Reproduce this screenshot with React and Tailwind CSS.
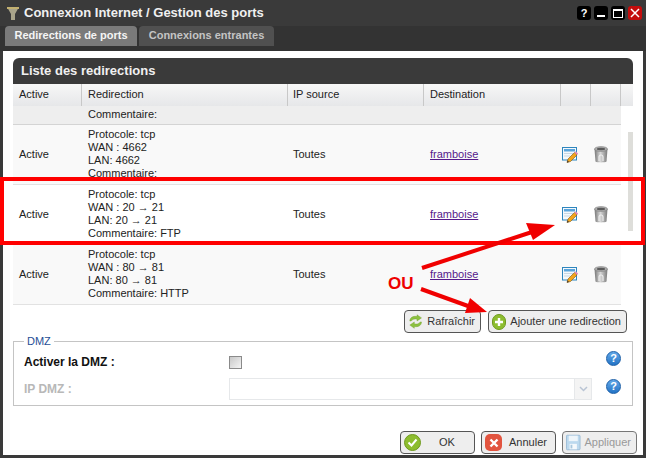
import React from "react";

function EditIcon() {
  return (
    <svg width="18" height="18" viewBox="0 0 18 18">
      <rect x="1.500" y="1.500" width="14" height="12.500" fill="#f4f8fc" stroke="#2f86bd" />
      <rect x="3" y="3" width="11" height="2.500" fill="#5aa5dc" />
      <path d="M3 7.500h9M3 10h6" stroke="#c9d8e4" />
      <path d="M6 16.500l1-3.500 6.500-6.500 2.500 2.500-6.500 6.500z" fill="#f2a51e" stroke="#7a5410" strokeWidth="0.6" />
      <path d="M13.500 6.500l1.200-1.200 2.500 2.500-1.200 1.200z" fill="#e58ab8" />
      <path d="M6 16.500l.6-2 1.400 1.400z" fill="#333" />
    </svg>
  );
}

function TrashIcon() {
  return (
    <svg width="14" height="17" viewBox="0 0 14 17">
      <defs>
        <linearGradient id="bin" x1="0" x2="1" y1="0" y2="0">
          <stop offset="0" stopColor="#777" />
          <stop offset="0.45" stopColor="#d8d8d8" />
          <stop offset="1" stopColor="#7a7a7a" />
        </linearGradient>
      </defs>
      <path d="M0.500 3l1 12.500c1.500 1.200 9.500 1.200 11 0L13.500 3z" fill="url(#bin)" />
      <ellipse cx="7" cy="3" rx="6.500" ry="2.400" fill="#b0b0b0" stroke="#707070" strokeWidth="0.5" />
      <ellipse cx="7" cy="3" rx="4.200" ry="1.200" fill="#5c5c5c" />
      <path d="M5 15v-4a2 2 0 0 1 4 0v4" fill="none" stroke="#f4f4f4" strokeWidth="1.200" opacity="0.85" />
    </svg>
  );
}

function HelpIcon() {
  return (
    <span className="flex h-[15px] w-[15px] items-center justify-center rounded-full border border-[#1c5fa8] bg-gradient-to-b from-[#62a8e8] to-[#2274c6] text-[11px] font-bold leading-none text-white">
      ?
    </span>
  );
}

function RefreshIcon() {
  return (
    <svg width="17" height="15" viewBox="0 0 17 15">
      <path d="M2 7c0-4 4-6 8-5V0l5 3.500-5 3.500V5c-3-.8-5 0-6.500 2z" fill="#8cc13f" stroke="#6c9a2a" strokeWidth="0.4" />
      <path d="M15 8c0 4-4 6-8 5v2L2 11.500 7 8v2c3 .8 5 0 6.500-2z" fill="#8cc13f" stroke="#6c9a2a" strokeWidth="0.4" />
    </svg>
  );
}

function PlusIcon() {
  return (
    <span className="flex h-[16px] w-[16px] items-center justify-center rounded-full border border-[#6f9a1e] bg-[#8dbd2f]">
      <svg width="10" height="10" viewBox="0 0 10 10">
        <path d="M5 1v8M1 5h8" stroke="#fff" strokeWidth="2.400" />
      </svg>
    </span>
  );
}

function OkIcon() {
  return (
    <span className="flex h-[17px] w-[17px] items-center justify-center rounded-full border border-[#6f9a1e] bg-[#8dbd2f]">
      <svg width="11" height="9" viewBox="0 0 11 9">
        <path d="M1.500 4.500l3 3 5-6" fill="none" stroke="#fff" strokeWidth="2" />
      </svg>
    </span>
  );
}

function CancelIcon() {
  return (
    <span className="flex h-[17px] w-[17px] items-center justify-center rounded-[5px] bg-[#e2543f]">
      <svg width="10" height="10" viewBox="0 0 10 10">
        <path d="M1.500 1.500l7 7M8.500 1.500l-7 7" stroke="#fff" strokeWidth="2.400" />
      </svg>
    </span>
  );
}

function SaveIcon() {
  return (
    <svg width="16" height="17" viewBox="0 0 16 17">
      <rect x="0.500" y="0.500" width="15" height="16" rx="1" fill="#bcd9ee" stroke="#9bbcd6" />
      <rect x="3" y="1" width="10" height="6" fill="#eef5fa" />
      <rect x="4" y="10" width="8" height="6" fill="#f5f9fc" />
      <rect x="5" y="11" width="2" height="4" fill="#a9c8de" />
    </svg>
  );
}

function WinButton({ className, children }) {
  return (
    <span className={`flex h-[14px] w-[14px] items-center justify-center rounded-[3px] ${className}`}>
      {children}
    </span>
  );
}

function Row({ wan, lan, comment, white }) {
  return (
    <div className={`flex h-[60px] items-center border-b border-[#e2e2e2] text-[11px] leading-[13px] text-[#222] ${white ? "bg-white" : "bg-[#f9f9f9]"}`}>
      <div className="w-[69px] pl-[6px]">Active</div>
      <div className="w-[206px] pb-[2px] pl-[6px]">
        <div>Protocole: tcp</div>
        <div>WAN : {wan}</div>
        <div>LAN: {lan}</div>
        <div>Commentaire:{comment ? ` ${comment}` : ""}</div>
      </div>
      <div className="w-[136px] pl-[5px]">Toutes</div>
      <div className="w-[137px] pl-[6px] text-[#551a8b] underline">framboise</div>
      <div className="flex w-[30px] justify-start">
        <EditIcon />
      </div>
      <div className="flex w-[30px] justify-start pl-[3px]">
        <TrashIcon />
      </div>
    </div>
  );
}

function Button({ icon, width, dim, children }) {
  return (
    <button
      className={`flex h-[23px] shrink-0 items-center gap-[4px] rounded-[4px] border bg-[#eeeeee] pl-[3px] text-[11px] ${width} ${dim ? "border-[#777] text-[#999]" : "border-[#555] text-[#333]"}`}
    >
      {icon}
      <span className="flex-1 whitespace-nowrap pr-[5px] text-center">{children}</span>
    </button>
  );
}

export default function App() {
  return (
    <div className="relative flex h-[458px] w-[646px] flex-col overflow-hidden bg-[#3a3a3a] font-['Liberation_Sans',Arial,sans-serif]">
      <div className="flex h-[26px] shrink-0 items-center pl-[6px] pr-[4px]">
        <svg width="14" height="17" viewBox="0 0 14 17">
          <path d="M1 2h12l-4 7v6H5V9z" fill="#a9a48a" />
          <path d="M1 2h12v2H1z" fill="#c2b070" />
        </svg>
        <span className="ml-[4px] text-[13px] font-bold text-[#f0f0f0]">
          Connexion Internet / Gestion des ports
        </span>
        <div className="ml-auto flex gap-[3px]">
          <WinButton className="bg-black text-[11px] font-bold text-white">?</WinButton>
          <WinButton className="items-end bg-black pb-[3px]">
            <span className="h-[2px] w-[8px] bg-white" />
          </WinButton>
          <WinButton className="bg-black">
            <span className="h-[9px] w-[10px] border border-t-2 border-white" />
          </WinButton>
          <WinButton className="bg-[#c40d0d]">
            <svg width="10" height="10" viewBox="0 0 10 10">
              <path d="M1 1l8 8M9 1l-8 8" stroke="#fff" strokeWidth="1.500" />
            </svg>
          </WinButton>
        </div>
      </div>

      <div className="flex h-[25px] shrink-0 gap-[2px] bg-[#333] pl-[5px] text-[11px] font-bold">
        <div className="flex h-[20px] w-[132px] items-center justify-center rounded-t-[4px] bg-[#7a7a7a] pb-[1px] text-[#f5f5f5]">
          Redirections de ports
        </div>
        <div className="flex h-[20px] w-[135px] items-center justify-center rounded-t-[4px] bg-[#505050] pb-[1px] text-[#c4c4c4]">
          Connexions entrantes
        </div>
      </div>

      <div className="mx-[3px] mb-[3px] flex flex-1 flex-col bg-white px-[10px] pt-[7px]">
        <div className="flex h-[26px] shrink-0 items-center rounded-t-[6px] bg-[#3a3a3a] pb-[1px] pl-[8px] text-[13px] font-bold text-[#f0f0f0]">
          Liste des redirections
        </div>
        <div className="flex h-[22px] shrink-0 items-center bg-gradient-to-b from-[#f7f7f7] to-[#e6e7e9] text-[11px] text-[#222]">
          <div className="flex h-full w-[69px] items-center border-r border-[#c8c8c8] pb-[1px] pl-[6px]">Active</div>
          <div className="flex h-full w-[206px] items-center border-r border-[#c8c8c8] pb-[1px] pl-[6px]">Redirection</div>
          <div className="flex h-full w-[136px] items-center border-r border-[#c8c8c8] pb-[1px] pl-[5px]">IP source</div>
          <div className="flex h-full w-[137px] items-center border-r border-[#c8c8c8] pb-[1px] pl-[6px]">Destination</div>
          <div className="h-full w-[30px] border-r border-[#c8c8c8]" />
          <div className="h-full w-[30px] border-r border-[#c8c8c8]" />
        </div>
        <div className="relative">
          <div className="w-[608px]">
            <div className="flex h-[19px] items-center border-b border-[#d4d4d4] bg-[#eeeeee] pb-[1px] pl-[75px] text-[11px] text-[#222]">
              Commentaire:
            </div>
            <Row wan="4662" lan="4662" comment="" />
            <Row wan="20 → 21" lan="20 → 21" comment="FTP" white />
            <Row wan="80 → 81" lan="80 → 81" comment="HTTP" />
          </div>
          <div className="absolute right-0 top-[26px] h-[99px] w-[5px] bg-[#dededa]" />
        </div>

        <div className="mt-[5px] flex justify-end gap-[7px] pr-[6px]">
          <Button width="w-[77px]" icon={<RefreshIcon />}>Rafraîchir</Button>
          <Button width="w-[139px]" icon={<PlusIcon />}>Ajouter une redirection</Button>
        </div>

        <fieldset className="h-[73px] w-[620px] border border-[#c4c4c4] px-[10px] text-[11px]">
          <legend className="px-[3px] text-[11px] text-[#1f4f96]">DMZ</legend>
          <div className="mt-[1px] flex h-[22px] items-center">
            <span className="w-[205px] text-[12px] font-bold text-[#111]">Activer la DMZ :</span>
            <span className="mt-[2px] h-[13px] w-[13px] border border-[#8a8a8a] bg-gradient-to-br from-[#c8c8c8] to-[#f4f4f4]" />
            <span className="mb-[6px] ml-auto mr-[1px]"><HelpIcon /></span>
          </div>
          <div className="mt-[5px] flex h-[22px] items-center">
            <span className="w-[205px] text-[12px] font-bold text-[#b8b8b8]">IP DMZ :</span>
            <div className="flex h-[22px] w-[363px] justify-end border border-[#e6e8ea] bg-white">
              <span className="flex w-[17px] items-center justify-center border-l border-[#e6e8ea] bg-[#f4f4f4]">
                <svg width="9" height="6" viewBox="0 0 9 6">
                  <path d="M1 1l3.500 3.500L8 1" fill="none" stroke="#b9c4d4" strokeWidth="1.500" />
                </svg>
              </span>
            </div>
            <span className="mb-[4px] ml-auto mr-[1px]"><HelpIcon /></span>
          </div>
        </fieldset>

        <div className="mr-[-4px] mt-[25px] flex justify-end gap-[6px]">
          <Button width="w-[75px]" icon={<OkIcon />}>OK</Button>
          <Button width="w-[75px]" icon={<CancelIcon />}>Annuler</Button>
          <Button width="w-[75px]" dim icon={<SaveIcon />}>Appliquer</Button>
        </div>
      </div>

      {/* annotations drawn on top of the screenshot */}
      <div className="absolute left-0 top-[177px] h-[68px] w-[645px] border-[4px] border-[#ff0000]" />
      <span className="absolute left-[388px] top-[271px] text-[17px] font-bold text-[#ee0000]">OU</span>
      <svg className="absolute left-0 top-0" width="646" height="458" viewBox="0 0 646 458">
        <path d="M422 268L532 232" stroke="#f00000" strokeWidth="4" />
        <path d="M555 225L526 223 533 240z" fill="#f00000" />
        <path d="M421 289L468 306" stroke="#f00000" strokeWidth="4" />
        <path d="M487 312L470 298 465 313z" fill="#f00000" />
      </svg>
    </div>
  );
}
